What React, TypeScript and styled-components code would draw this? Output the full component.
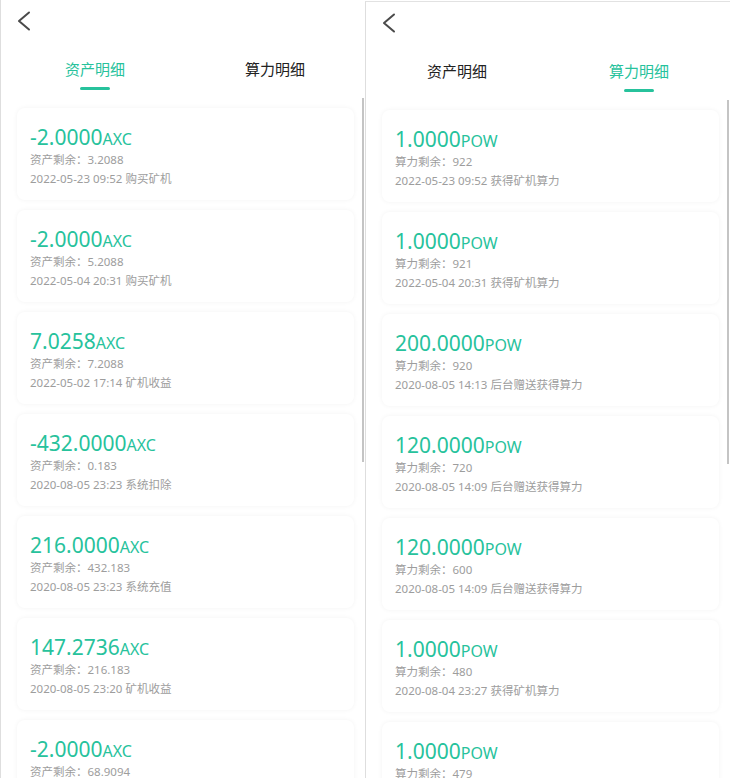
import React from 'react';
import styled, { createGlobalStyle } from 'styled-components';

const teal = '#27c29c';

const assetRecords = [
    { id: 1, amount: '-2.0000', rest: '3.2088', time: '2022-05-23 09:52', note: '购买矿机' },
    { id: 2, amount: '-2.0000', rest: '5.2088', time: '2022-05-04 20:31', note: '购买矿机' },
    { id: 3, amount: '7.0258', rest: '7.2088', time: '2022-05-02 17:14', note: '矿机收益' },
    { id: 4, amount: '-432.0000', rest: '0.183', time: '2020-08-05 23:23', note: '系统扣除' },
    { id: 5, amount: '216.0000', rest: '432.183', time: '2020-08-05 23:23', note: '系统充值' },
    { id: 6, amount: '147.2736', rest: '216.183', time: '2020-08-05 23:20', note: '矿机收益' },
    { id: 7, amount: '-2.0000', rest: '68.9094', time: '2020-08-04 23:27', note: '购买矿机' },
];

const powerRecords = [
    { id: 1, amount: '1.0000', rest: '922', time: '2022-05-23 09:52', note: '获得矿机算力' },
    { id: 2, amount: '1.0000', rest: '921', time: '2022-05-04 20:31', note: '获得矿机算力' },
    { id: 3, amount: '200.0000', rest: '920', time: '2020-08-05 14:13', note: '后台赠送获得算力' },
    { id: 4, amount: '120.0000', rest: '720', time: '2020-08-05 14:09', note: '后台赠送获得算力' },
    { id: 5, amount: '120.0000', rest: '600', time: '2020-08-05 14:09', note: '后台赠送获得算力' },
    { id: 6, amount: '1.0000', rest: '480', time: '2020-08-04 23:27', note: '获得矿机算力' },
    { id: 7, amount: '1.0000', rest: '479', time: '2020-08-04 23:26', note: '获得矿机算力' },
];

type Rec = { id: number; amount: string; rest: string; time: string; note: string };

const BackIcon = () => (
    <svg width="14" height="20" viewBox="0 0 14 20" fill="none">
        <polyline points="12,1.5 2,10 12,18.5" stroke="#4a4a4a" strokeWidth="2" strokeLinecap="round" strokeLinejoin="round" />
    </svg>
);

const Screen = ({ active, records, unit, restLabel, offset, top }: {
    active: number; records: Rec[]; unit: string; restLabel: string; offset: number; top: number;
}) => (
    <Panel $top={top}>
        <Header>
            <BackIcon />
        </Header>
        <Tabs $offset={offset}>
            {['资产明细', '算力明细'].map((t, i) => (
                <Tab key={t} $active={i === active}>
                    {t}
                    <Underline $active={i === active} />
                </Tab>
            ))}
        </Tabs>
        <List>
            {records.map((r) => (
                <Card key={r.id}>
                    <Amount>
                        {r.amount}<Unit>{unit}</Unit>
                    </Amount>
                    <Line>{restLabel}：{r.rest}</Line>
                    <Line>{r.time} {r.note}</Line>
                </Card>
            ))}
        </List>
        <ScrollThumb />
    </Panel>
);

export default function App() {
    return (
        <>
            <GlobalStyle />
            <Page>
                <Screen active={0} records={assetRecords} unit="AXC" restLabel="资产剩余" offset={4} top={0} />
                <Screen active={1} records={powerRecords} unit="POW" restLabel="算力剩余" offset={0} top={1} />
            </Page>
        </>
    );
}

const GlobalStyle = createGlobalStyle`
    html, body {
        margin: 0;
        padding: 0;
        background: #fff;
    }
    body {
        font-family: "Noto Sans", "Noto Sans CJK SC", sans-serif;
    }
`;

const Page = styled.div`
    display: flex;
    width: 730px;
    height: 778px;
    overflow: hidden;
`;

const Panel = styled.div<{ $top: number }>`
    position: relative;
    width: 365px;
    flex-shrink: 0;
    margin-top: ${(p) => p.$top}px;
    border-left: 1px solid #dedede;
    border-top: ${(p) => (p.$top ? '1px solid #e2e2e2' : 'none')};
    box-sizing: border-box;
    overflow: hidden;

    &:last-child {
        flex: 1;
    }
`;

const Header = styled.div`
    height: 42px;
    padding: 11px 0 0 16px;
    box-sizing: border-box;
`;

const Tabs = styled.div<{ $offset: number }>`
    display: grid;
    grid-template-columns: 1fr 1fr;
    padding: 17px 0 0 ${(p) => p.$offset}px;
`;

const Tab = styled.div<{ $active: boolean }>`
    display: flex;
    flex-direction: column;
    align-items: center;
    font-size: 15px;
    line-height: 20px;
    color: ${(p) => (p.$active ? teal : '#222')};
`;

const Underline = styled.span<{ $active: boolean }>`
    width: 30px;
    height: 2.5px;
    margin-top: 8px;
    border-radius: 2px;
    background: ${(p) => (p.$active ? teal : 'transparent')};
`;

const List = styled.div`
    display: flex;
    flex-direction: column;
    gap: 10px;
    padding: 18px 11px 0 16px;
`;

const Card = styled.div`
    height: 92px;
    box-sizing: border-box;
    padding: 16px 13px 0;
    border-radius: 8px;
    background: #fff;
    box-shadow: 0 0 5px rgba(0, 0, 0, 0.05);
    overflow: hidden;
`;

const Amount = styled.div`
    display: flex;
    align-items: baseline;
    height: 26px;
    font-size: 21px;
    line-height: 26px;
    color: ${teal};
`;

const Unit = styled.span`
    font-size: 16px;
    line-height: 1;
`;

const Line = styled.div`
    height: 19px;
    font-size: 11.5px;
    line-height: 19px;
    color: #9d9d9d;
    white-space: nowrap;
`;

const ScrollThumb = styled.div`
    position: absolute;
    top: 98px;
    right: 1px;
    width: 2px;
    height: 364px;
    background: #c4c4c4;
`;
